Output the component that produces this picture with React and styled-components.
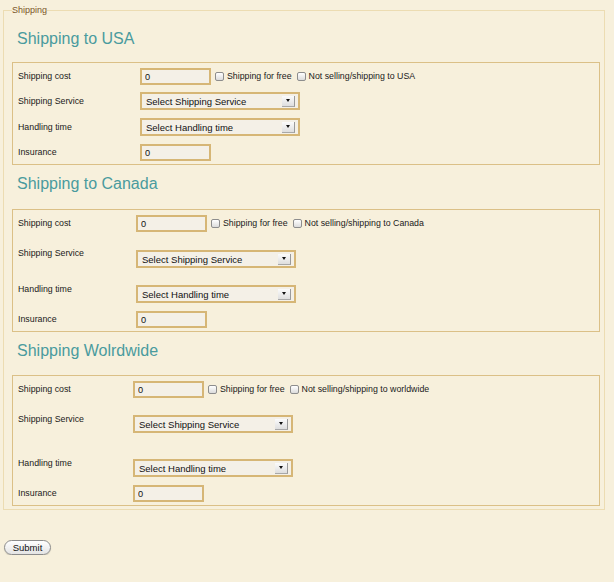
import React from 'react'
import styled, { createGlobalStyle } from 'styled-components'

const GlobalStyle = createGlobalStyle`
  html, body {
    margin: 0;
    background: #f7f0dc;
    font-family: "Liberation Sans", Arial, sans-serif;
    color: #1a1a1a;
  }
`

const sections = [
  {
    title: 'Shipping to USA',
    region: 'USA',
    labelWidth: 122,
    headTop: 8,
    headBottom: 13,
    rows: [{ gap: 0 }, { gap: 7 }, { gap: 8 }, { gap: 8 }],
  },
  {
    title: 'Shipping to Canada',
    region: 'Canada',
    labelWidth: 118,
    headTop: 9,
    headBottom: 15,
    rows: [
      { gap: 0 },
      { gap: 16, top: true, offset: 2 },
      { gap: 16, top: true, offset: 1 },
      { gap: 8 },
    ],
  },
  {
    title: 'Shipping Wolrdwide',
    region: 'worldwide',
    labelWidth: 115,
    headTop: 9,
    headBottom: 14,
    rows: [
      { gap: 0 },
      { gap: 16, top: true, offset: 1 },
      { gap: 25, top: true, offset: 1 },
      { gap: 8 },
    ],
  },
]

const App = () => {
  return (
    <Page>
      <GlobalStyle />
      <Fieldset>
        <Legend>Shipping</Legend>
        {sections.map((s) => (
          <div key={s.region}>
            <Heading $mt={s.headTop} $mb={s.headBottom}>{s.title}</Heading>
            <Box>
              <Row $gap={s.rows[0].gap}>
                <Label $w={s.labelWidth}>Shipping cost</Label>
                <Controls>
                  <TextInput defaultValue="0" />
                  <CheckLabel>
                    <Check type="checkbox" />
                    Shipping for free
                  </CheckLabel>
                  <CheckLabel>
                    <Check type="checkbox" />
                    Not selling/shipping to {s.region}
                  </CheckLabel>
                </Controls>
              </Row>
              <Row $gap={s.rows[1].gap} $top={s.rows[1].top}>
                <Label $w={s.labelWidth}>Shipping Service</Label>
                <Controls $offset={s.rows[1].offset}>
                  <SelectBox>
                    <span>Select Shipping Service</span>
                    <Arrow />
                  </SelectBox>
                </Controls>
              </Row>
              <Row $gap={s.rows[2].gap} $top={s.rows[2].top}>
                <Label $w={s.labelWidth}>Handling time</Label>
                <Controls $offset={s.rows[2].offset}>
                  <SelectBox>
                    <span>Select Handling time</span>
                    <Arrow />
                  </SelectBox>
                </Controls>
              </Row>
              <Row $gap={s.rows[3].gap}>
                <Label $w={s.labelWidth}>Insurance</Label>
                <Controls>
                  <TextInput defaultValue="0" />
                </Controls>
              </Row>
            </Box>
          </div>
        ))}
      </Fieldset>
      <Submit type="button">Submit</Submit>
    </Page>
  )
}

const Page = styled.div`
  padding: 5px 9px 0 3px;
`
const Fieldset = styled.fieldset`
  margin: 0;
  min-width: 0;
  border: 1px solid #ecdcb2;
  padding: 5px 4px 3px 8px;
`
const Legend = styled.legend`
  padding: 0;
  font-size: 9px;
  line-height: 11px;
  color: #7a5528;
`
const Heading = styled.h2`
  margin: ${(p) => p.$mt}px 0 ${(p) => p.$mb}px 5px;
  font-size: 16px;
  line-height: 20px;
  font-weight: normal;
  color: #4a9b9e;
`
const Box = styled.div`
  border: 1px solid #dbc087;
  padding: 5px 5px 3px 5px;
`
const Row = styled.div`
  display: flex;
  align-items: ${(p) => (p.$top ? 'flex-start' : 'center')};
  margin-top: ${(p) => p.$gap}px;
`
const Label = styled.div`
  width: ${(p) => p.$w}px;
  flex-shrink: 0;
  font-size: 8.8px;
  line-height: 11px;
`
const Controls = styled.div`
  display: flex;
  align-items: center;
  gap: 4px;
  margin-top: ${(p) => p.$offset || 0}px;
`
const TextInput = styled.input`
  box-sizing: border-box;
  width: 71px;
  height: 17px;
  margin: 0;
  padding: 0 3px;
  border: 2px solid #d6b676;
  background: #f4f0e7;
  font-family: "Liberation Sans", Arial, sans-serif;
  font-size: 9.2px;
  color: #111;
  outline: none;
`
const CheckLabel = styled.label`
  display: inline-flex;
  align-items: center;
  gap: 3px;
  font-size: 8.8px;
  line-height: 11px;
  margin-right: 1px;
`
const Check = styled.input`
  appearance: none;
  box-sizing: border-box;
  width: 9px;
  height: 9px;
  margin: 0;
  border: 1px solid #8d8d8d;
  border-radius: 2px;
  background: linear-gradient(#ffffff, #dcdcdc);
`
const SelectBox = styled.div`
  box-sizing: border-box;
  width: 160px;
  height: 18px;
  display: flex;
  align-items: center;
  justify-content: space-between;
  padding: 0 3px 0 4px;
  border: 2px solid #d6b676;
  background: #f4f0e7;
  font-size: 9.5px;
  color: #111;
`
const Arrow = styled.div`
  box-sizing: border-box;
  width: 13px;
  height: 11px;
  display: flex;
  align-items: center;
  justify-content: center;
  background: linear-gradient(#fbfbfb, #dedede);
  border-right: 1px solid #9a9a9a;
  border-bottom: 1px solid #a8a8a8;
  &::after {
    content: '';
    border-left: 2.5px solid transparent;
    border-right: 2.5px solid transparent;
    border-top: 3px solid #111;
  }
`
const Submit = styled.button`
  margin: 30px 0 0 1px;
  height: 15px;
  width: 47px;
  padding: 0;
  border: 1px solid #8c8c8c;
  border-radius: 8px;
  background: linear-gradient(#ffffff, #e4e4e4);
  box-shadow: 0 1px 1px rgba(0, 0, 0, 0.15);
  font-family: "Liberation Sans", Arial, sans-serif;
  font-size: 9.5px;
  line-height: 13px;
  color: #111;
`

export default App
